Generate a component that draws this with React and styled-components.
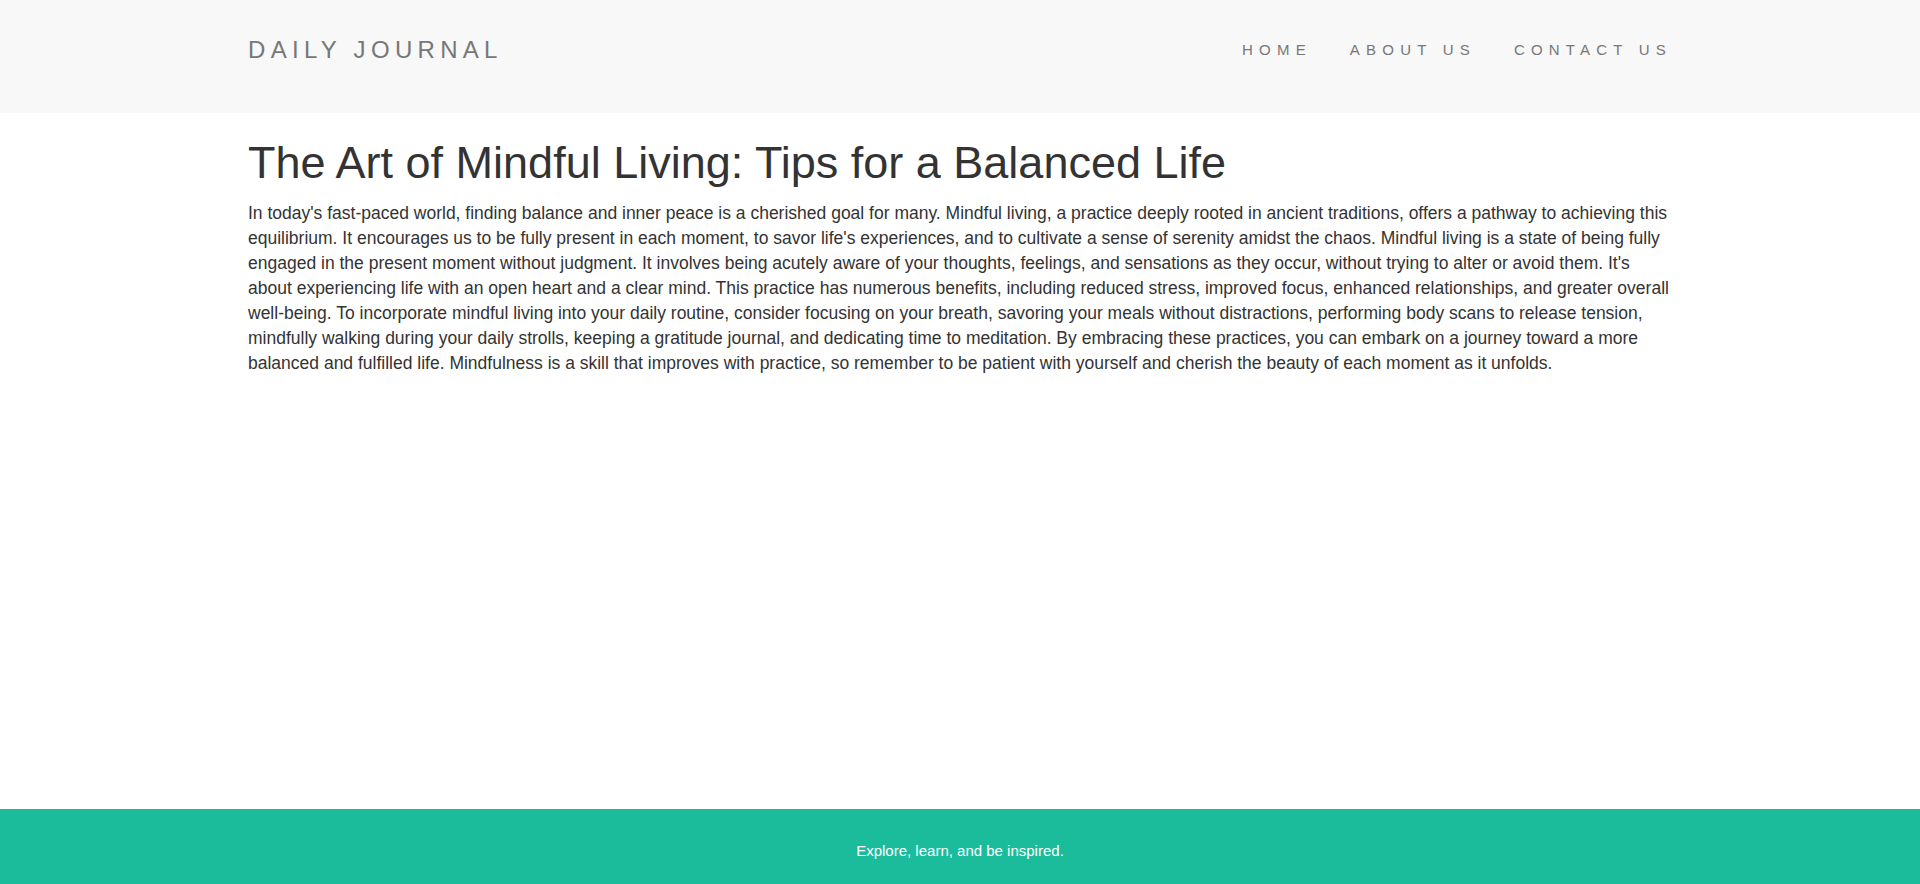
import React from 'react'
import styled, { createGlobalStyle } from 'styled-components'

const GlobalStyle = createGlobalStyle`
    html, body {
        margin: 0;
        padding: 0;
        background-color: #fff;
    }
    body {
        font-family: "Liberation Sans", Arial, Helvetica, sans-serif;
        color: #333;
    }
`;

const Page = styled.div`
    min-height: 100vh;
    display: flex;
    flex-direction: column;
`;

const Navbar = styled.header`
    background-color: #f8f8f8;
    height: 113px;
    box-sizing: border-box;
    padding-top: 35px;
`;

const Container = styled.div`
    max-width: 1424px;
    margin: 0 auto;
    width: 100%;
`;

const NavInner = styled(Container)`
    display: flex;
    justify-content: space-between;
    align-items: center;
    height: 30px;
`;

const Brand = styled.a`
    font-size: 24px;
    letter-spacing: 5.3px;
    color: #777;
    text-decoration: none;
    text-transform: uppercase;
`;

const NavLinks = styled.ul`
    display: flex;
    gap: 38px;
    list-style: none;
    margin: 0;
    padding: 0;
`;

const NavLink = styled.a`
    font-size: 15px;
    letter-spacing: 6.2px;
    color: #777;
    text-decoration: none;
    text-transform: uppercase;
`;

const Main = styled(Container)`
    flex: 1;
    padding-bottom: 40px;
`;

const Title = styled.h1`
    font-size: 45px;
    font-weight: 400;
    line-height: 1.1;
    color: #333;
    margin: 25px 0 13px 0;
`;

const Body = styled.p`
    font-size: 17.5px;
    line-height: 25px;
    color: #333;
    margin: 0;
`;

const Footer = styled.footer`
    background-color: #1abc9c;
    height: 75px;
    box-sizing: border-box;
    padding-top: 33px;
    text-align: center;
`;

const FooterText = styled.p`
    margin: 0;
    font-size: 15px;
    line-height: 17px;
    color: #fff;
`;

const links = ['Home', 'About Us', 'Contact Us'];

const post = {
    title: 'The Art of Mindful Living: Tips for a Balanced Life',
    content: "In today's fast-paced world, finding balance and inner peace is a cherished goal for many. Mindful living, a practice deeply rooted in ancient traditions, offers a pathway to achieving this equilibrium. It encourages us to be fully present in each moment, to savor life's experiences, and to cultivate a sense of serenity amidst the chaos. Mindful living is a state of being fully engaged in the present moment without judgment. It involves being acutely aware of your thoughts, feelings, and sensations as they occur, without trying to alter or avoid them. It's about experiencing life with an open heart and a clear mind. This practice has numerous benefits, including reduced stress, improved focus, enhanced relationships, and greater overall well-being. To incorporate mindful living into your daily routine, consider focusing on your breath, savoring your meals without distractions, performing body scans to release tension, mindfully walking during your daily strolls, keeping a gratitude journal, and dedicating time to meditation. By embracing these practices, you can embark on a journey toward a more balanced and fulfilled life. Mindfulness is a skill that improves with practice, so remember to be patient with yourself and cherish the beauty of each moment as it unfolds.",
};

const App = () => {
    return (
        <Page>
            <GlobalStyle />
            <Navbar>
                <NavInner>
                    <Brand href="#">Daily Journal</Brand>
                    <NavLinks>
                        {links.map((link) => (
                            <li key={link}>
                                <NavLink href="#">{link}</NavLink>
                            </li>
                        ))}
                    </NavLinks>
                </NavInner>
            </Navbar>
            <Main as="main">
                <Title>{post.title}</Title>
                <Body>{post.content}</Body>
            </Main>
            <Footer>
                <FooterText>Explore, learn, and be inspired.</FooterText>
            </Footer>
        </Page>
    )
}

export default App
